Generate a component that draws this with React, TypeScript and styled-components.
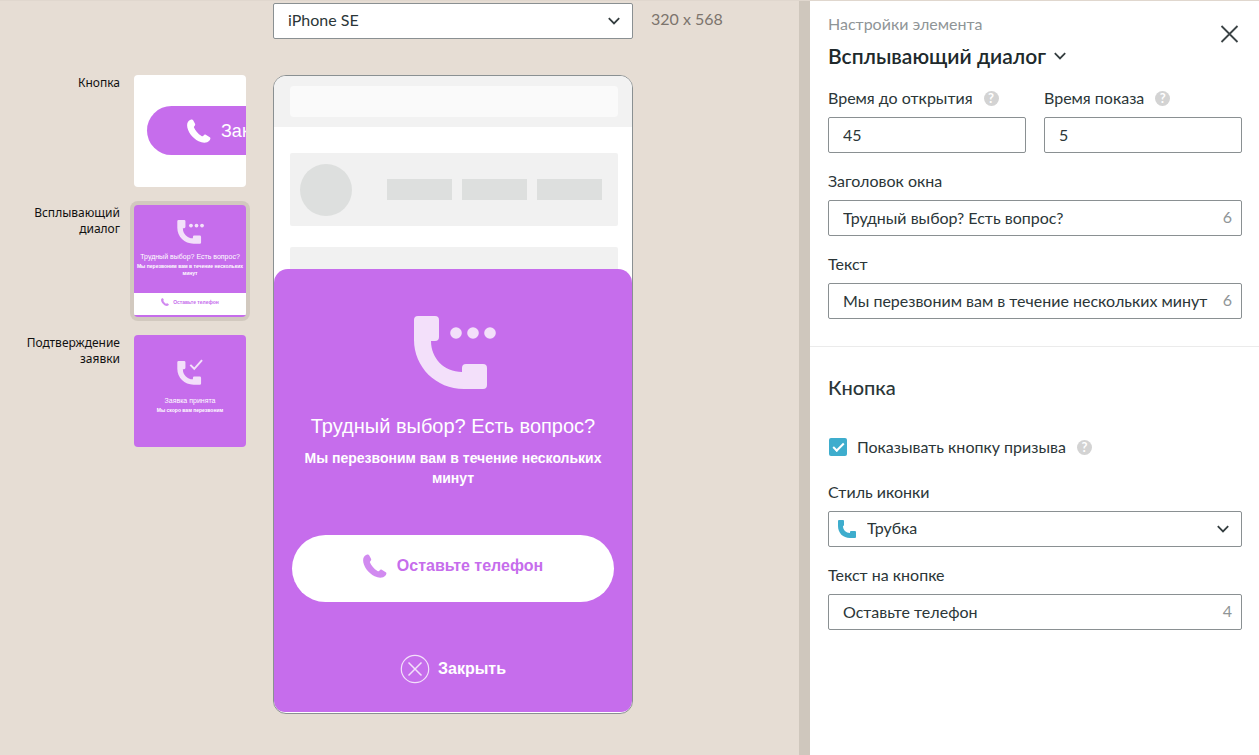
import React from 'react';
import styled, { createGlobalStyle } from 'styled-components';

const ui = 'Lato, "Noto Sans", sans-serif';
const captions = '"Noto Sans", sans-serif';
const preview = '"Liberation Sans", Arial, sans-serif';
const violet = '#c66dec';

const Global = createGlobalStyle`
  *, *::before, *::after { box-sizing: border-box; }
  body { margin: 0; font: 400 16px/24px ${ui}; color: #2b3638; background: #e6ddd4; }
  button, input, select { font: inherit; color: inherit; margin: 0; }
  h1, h2, p { margin: 0; }
  svg { display: block; flex: none; }
`;

const Page = styled.div`
  display: flex;
  min-height: 100vh;
  border-top: 1px solid #e0d7ce;
`;

const Canvas = styled.main`
  flex: 1;
  min-width: 0;
  display: flex;
  flex-direction: column;
  gap: 36px;
  padding: 2px 0 40px;
`;

const DeviceBar = styled.div`
  display: flex;
  gap: 18px;
  padding-left: 273px;
`;

const Frame = styled.div<{ $wide?: boolean }>`
  position: relative;
  display: flex;
  align-items: center;
  height: 36px;
  width: ${(p) => (p.$wide ? '100%' : '360px')};
  background: #fff;
  border: 1px solid #8a9092;
  border-radius: 2px;
`;

const Picker = styled.select<{ $indent: number }>`
  appearance: none;
  flex: 1;
  min-width: 0;
  height: 34px;
  padding: 0 36px 2px ${(p) => p.$indent}px;
  border: 0;
  background: transparent;
  outline: 0;
`;

const FrameIcon = styled.span<{ $side: 'left' | 'right' }>`
  position: absolute;
  ${(p) => (p.$side === 'left' ? 'left: 8px' : 'right: 12px')};
  pointer-events: none;
`;

const DeviceSize = styled.span`
  line-height: 32px;
  color: #7c746d;
`;

const Workspace = styled.div`
  display: flex;
  align-items: flex-start;
  gap: 27px;
`;

const Steps = styled.nav`
  display: flex;
  flex-direction: column;
  gap: 18px;
  width: 246px;
`;

const Step = styled.button`
  display: flex;
  justify-content: flex-end;
  align-items: flex-start;
  gap: 14px;
  padding: 0;
  border: 0;
  background: none;
  font-family: ${captions};
  font-size: 12px;
  line-height: 16px;
  color: #111;
  text-align: right;
`;

const StepName = styled.span`
  width: 110px;
`;

const Thumb = styled.span<{ $light?: boolean; $active?: boolean }>`
  display: flex;
  flex-direction: column;
  align-items: center;
  flex: none;
  width: 112px;
  height: 112px;
  overflow: hidden;
  border-radius: 4px;
  background: ${(p) => (p.$light ? '#fff' : violet)};
  box-shadow: ${(p) => (p.$active ? '0 0 0 4px #d2c9bf' : 'none')};
  color: #fff;
  font-family: ${preview};
  text-align: center;
`;

const ThumbPill = styled.span`
  display: flex;
  align-items: center;
  align-self: flex-start;
  gap: 10px;
  width: 200px;
  height: 49px;
  margin: 31px 0 0 13px;
  padding-left: 40px;
  border-radius: 25px;
  background: ${violet};
  font-size: 18px;
`;

const ThumbIcon = styled.span<{ $low?: boolean }>`
  padding: ${(p) => (p.$low ? '26px 0 10px' : '15px 0 7px')};
`;

const ThumbTitle = styled.span`
  font-size: 7px;
  line-height: 11px;
  white-space: nowrap;
`;

const ThumbText = styled.span`
  width: 112px;
  margin-top: 1px;
  font-size: 5px;
  line-height: 7px;
  font-weight: 700;
`;

const ThumbStrip = styled.span`
  display: flex;
  align-items: center;
  justify-content: center;
  gap: 4px;
  width: 100%;
  height: 22px;
  padding-bottom: 4px;
  margin: auto 0 2px;
  background: #fff;
  color: ${violet};
  font-size: 5px;
  font-weight: 700;
`;

const Phone = styled.section`
  position: relative;
  width: 360px;
  height: 639px;
  overflow: hidden;
  border: 1px solid #8a9092;
  border-radius: 13px;
  background: #fff;
  font-family: ${preview};
`;

const MockHeader = styled.div`
  padding: 10px 14px 10px 16px;
  background: #f2f2f2;
`;

const MockAddress = styled.div`
  height: 31px;
  border-radius: 4px;
  background: #fafafa;
`;

const MockBody = styled.div`
  display: flex;
  flex-direction: column;
  gap: 21px;
  padding: 26px 14px 0 16px;
`;

const MockBlock = styled.div`
  display: flex;
  align-items: center;
  gap: 10px;
  height: 73px;
  padding: 0 16px 0 10px;
  border-radius: 2px;
  background: #f1f1f1;
`;

const MockAvatar = styled.div`
  width: 52px;
  height: 52px;
  margin-right: 25px;
  border-radius: 50%;
  background: #dddfde;
`;

const MockLink = styled.div`
  flex: 1;
  height: 21px;
  background: #dddfde;
`;

const Popup = styled.div`
  position: absolute;
  inset: 193px 0 1px;
  display: flex;
  flex-direction: column;
  align-items: center;
  padding: 47px 18px 0;
  border-radius: 14px 14px 11px 11px;
  background: ${violet};
  color: #fff;
  text-align: center;
`;

const PopupTitle = styled.h2`
  margin-top: 24px;
  font-size: 20px;
  line-height: 24px;
  font-weight: 400;
`;

const PopupText = styled.p`
  margin-top: 10px;
  font-size: 14px;
  line-height: 20px;
  font-weight: 700;
`;

const CallButton = styled.button`
  display: flex;
  align-items: center;
  justify-content: center;
  gap: 10px;
  width: 100%;
  height: 67px;
  margin-top: 47px;
  padding: 0 0 6px;
  border: 0;
  border-radius: 34px;
  background: #fff;
  color: ${violet};
  font-weight: 700;
`;

const CloseLink = styled.button`
  display: flex;
  align-items: center;
  gap: 8px;
  margin-top: 52px;
  padding: 0;
  border: 0;
  background: none;
  font-weight: 700;
  color: #fff;
`;

const Panel = styled.aside`
  width: 460px;
  border-left: 11px solid #cfc7bd;
  background: #fff;
`;

const Section = styled.section`
  display: flex;
  flex-direction: column;
  gap: 16px;
  padding: 0 17px 27px 18px;

  & + & {
    padding-top: 28px;
    border-top: 1px solid #ebebeb;
  }
`;

const PanelHead = styled.header`
  display: flex;
  align-items: flex-start;
  justify-content: space-between;
  padding-top: 11px;
`;

const Hint = styled.p`
  color: #8f9597;
`;

const PlainButton = styled.button`
  display: flex;
  align-items: center;
  gap: 8px;
  padding: 0;
  border: 0;
  background: none;
`;

const CloseButton = styled(PlainButton)`
  margin-top: 10px;
`;

const PanelTitle = styled.h1`
  margin-top: 6px;
  font-size: 21px;
  line-height: 28px;
  font-weight: 600;
  color: #20292b;
`;

const SectionTitle = styled.h2`
  font-size: 20px;
  line-height: 24px;
  font-weight: 500;
  margin-bottom: 20px;
`;

const Pair = styled.div`
  display: grid;
  grid-template-columns: 1fr 1fr;
  gap: 18px;
`;

const Field = styled.div`
  display: flex;
  flex-direction: column;
  gap: 7px;
  min-width: 0;
`;

const LabelRow = styled.div`
  display: flex;
  align-items: center;
  gap: 11px;
`;

const CheckRow = styled(LabelRow)`
  margin-bottom: 5px;
`;

const TextInput = styled.input`
  flex: 1;
  min-width: 0;
  height: 34px;
  padding: 0 0 2px 14px;
  border: 0;
  background: transparent;
  outline: 0;
`;

const Counter = styled.span`
  padding: 0 9px 2px 8px;
  color: #8f9597;
`;

const CheckLabel = styled.label`
  display: flex;
  align-items: center;
  gap: 10px;
`;

const Check = styled.input`
  appearance: none;
  width: 18px;
  height: 18px;
  margin-left: 1px;
  border-radius: 2px;
  background: #3eadcd;
  display: grid;
  place-items: center;

  &::before {
    content: '';
    width: 11px;
    height: 6px;
    margin-bottom: 3px;
    border: solid #fff;
    border-width: 0 0 2px 2px;
    transform: rotate(-45deg);
  }
`;

const HelpBadge = styled.button`
  width: 15px;
  height: 15px;
  padding: 0;
  border: 0;
  border-radius: 50%;
  background: #d3d3d3;
  color: #fff;
  font-size: 13px;
  line-height: 15px;
  font-weight: 700;
`;

const Chevron = () => (
  <svg width="12" height="8" viewBox="0 0 12 8" fill="none" stroke="#343d3f" strokeWidth="1.8">
    <path d="M.8 1.200L6 6.400l5.200-5.200" />
  </svg>
);

const Handset = ({ size, opacity = 1 }: { size: number; opacity?: number }) => (
  <svg width={size} height={size} viewBox="0 0 24 24" fill="currentColor" fillOpacity={opacity}>
    <path d="M3.6.8C1.500 1.600.1 3.600.1 6.300c0 6 5.500 13 11.500 16 4 1.900 8.600 1.900 10.700-.5.8-.9 1.200-2 1.100-2.700-.1-.6-.5-.8-1-1.100l-3.600-2.200c-.6-.3-1.100-.3-1.600.1l-1.200 1c-.5.4-1 .4-1.500.1C11 15 8.200 11.700 7 8.600c-.2-.6-.1-1 .3-1.400l.6-.8c.4-.5.4-1 .1-1.600L6.300 1.400C5.800.6 4.800.3 3.600.8z" />
  </svg>
);

const BlockPhone = ({ width, mark }: { width: number; mark: 'dots' | 'check' }) => (
  <svg width={width} height={(width * 74) / 86} viewBox="-4 0 86 74" fill="#f3e0fa" overflow="visible">
    <path d="M4 0h17q4 0 4 4v17q0 4-4 4h-4c0 17 13 31 31 31v-4q0-4 4-4h17q4 0 4 4v17q0 4-4 4H50C22 73 0 51 0 24V4q0-4 4-4z" />
    {mark === 'dots' ? (
      <>
        <circle cx="42" cy="17" r="5.800" />
        <circle cx="59" cy="17" r="5.800" />
        <circle cx="76" cy="17" r="5.800" />
      </>
    ) : (
      <path d="M40 12l12 12L76-3" fill="none" stroke="#f3e0fa" strokeWidth="6" />
    )}
  </svg>
);

const Help = ({ about }: { about: string }) => <HelpBadge aria-label={about}>?</HelpBadge>;

type TextFieldProps = { id: string; label: string; value: string; left?: number; help?: boolean };

const TextField = ({ id, label, value, left, help }: TextFieldProps) => (
  <Field>
    <LabelRow>
      <label htmlFor={id}>{label}</label>
      {help && <Help about={label} />}
    </LabelRow>
    <Frame $wide>
      <TextInput id={id} defaultValue={value} />
      {left !== undefined && <Counter>{left}</Counter>}
    </Frame>
  </Field>
);

export default function App() {
  return (
    <>
      <Global />
      <Page>
        <Canvas>
          <DeviceBar>
            <Frame>
              <Picker $indent={14} aria-label="iPhone SE">
                <option>iPhone SE</option>
              </Picker>
              <FrameIcon $side="right"><Chevron /></FrameIcon>
            </Frame>
            <DeviceSize>320 x 568</DeviceSize>
          </DeviceBar>
          <Workspace>
            <Steps>
              <Step>
                <StepName>Кнопка</StepName>
                <Thumb $light>
                  <ThumbPill><Handset size={24} />Заказать</ThumbPill>
                </Thumb>
              </Step>
              <Step>
                <StepName>Всплывающий диалог</StepName>
                <Thumb $active>
                  <ThumbIcon><BlockPhone width={28} mark="dots" /></ThumbIcon>
                  <ThumbTitle>Трудный выбор? Есть вопрос?</ThumbTitle>
                  <ThumbText>Мы перезвоним вам в течение нескольких минут</ThumbText>
                  <ThumbStrip><Handset size={8} opacity={0.8} />Оставьте телефон</ThumbStrip>
                </Thumb>
              </Step>
              <Step>
                <StepName>Подтверждение заявки</StepName>
                <Thumb>
                  <ThumbIcon $low><BlockPhone width={28} mark="check" /></ThumbIcon>
                  <ThumbTitle>Заявка принята</ThumbTitle>
                  <ThumbText>Мы скоро вам перезвоним</ThumbText>
                </Thumb>
              </Step>
            </Steps>
            <Phone>
              <MockHeader><MockAddress /></MockHeader>
              <MockBody>
                <MockBlock>
                  <MockAvatar />
                  <MockLink />
                  <MockLink />
                  <MockLink />
                </MockBlock>
                <MockBlock />
              </MockBody>
              <Popup>
                <BlockPhone width={86} mark="dots" />
                <PopupTitle>Трудный выбор? Есть вопрос?</PopupTitle>
                <PopupText>Мы перезвоним вам в течение нескольких минут</PopupText>
                <CallButton><Handset size={24} opacity={0.8} />Оставьте телефон</CallButton>
                <CloseLink>
                  <svg width="30" height="30" viewBox="0 0 30 30" fill="none" stroke="#f3e0fa">
                    <circle cx="15" cy="15" r="13.700" strokeWidth="1.200" />
                    <path d="M8.500 8.500l13 13M21.500 8.500l-13 13" strokeWidth="1.500" />
                  </svg>
                  Закрыть
                </CloseLink>
              </Popup>
            </Phone>
          </Workspace>
        </Canvas>
        <Panel>
          <Section>
            <PanelHead>
              <div>
                <Hint>Настройки элемента</Hint>
                <PanelTitle>
                  <PlainButton>Всплывающий диалог<Chevron /></PlainButton>
                </PanelTitle>
              </div>
              <CloseButton aria-label="Закрыть">
                <svg width="24" height="24" viewBox="0 0 24 24" stroke="#3c4446" strokeWidth="1.800">
                  <path d="M3.500 4l16 16M19.500 4l-16 16" />
                </svg>
              </CloseButton>
            </PanelHead>
            <Pair>
              <TextField id="delay" label="Время до открытия" value="45" help />
              <TextField id="duration" label="Время показа" value="5" help />
            </Pair>
            <TextField id="title" label="Заголовок окна" value="Трудный выбор? Есть вопрос?" left={6} />
            <TextField id="text" label="Текст" value="Мы перезвоним вам в течение нескольких минут" left={6} />
          </Section>
          <Section>
            <SectionTitle>Кнопка</SectionTitle>
            <CheckRow>
              <CheckLabel>
                <Check type="checkbox" defaultChecked />
                Показывать кнопку призыва
              </CheckLabel>
              <Help about="Показывать кнопку призыва" />
            </CheckRow>
            <Field>
              <label htmlFor="icon">Стиль иконки</label>
              <Frame $wide>
                <FrameIcon $side="left">
                  <svg width="20" height="20" viewBox="0 0 20 20" fill="#3eadcd">
                    <path d="M2 1h4q1 0 1 1v4q0 1-1 1H6c0 4 3 7 7 7v-1q0-1 1-1h4q1 0 1 1v5q0 1-1 1h-5C6 19 1 14 1 7V2q0-1 1-1z" />
                  </svg>
                </FrameIcon>
                <Picker id="icon" $indent={38}>
                  <option>Трубка</option>
                </Picker>
                <FrameIcon $side="right"><Chevron /></FrameIcon>
              </Frame>
            </Field>
            <TextField id="caption" label="Текст на кнопке" value="Оставьте телефон" left={4} />
          </Section>
        </Panel>
      </Page>
    </>
  );
}
